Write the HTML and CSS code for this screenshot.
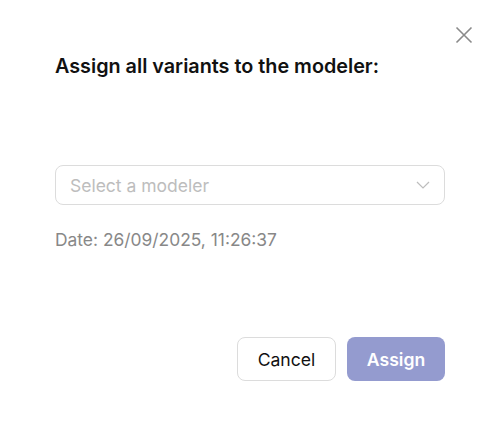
FILE: index.html
```html
<!DOCTYPE html>
<html>
<head>
<meta charset="utf-8">
<link rel="stylesheet" href="styles.css">
</head>
<body>
<div class="modal">
  <button class="close" aria-label="Close">
    <svg width="18" height="18" viewBox="0 0 18 18"><path d="M1.5 1.5L16.5 16.5M16.5 1.5L1.5 16.5" stroke="#8a8a8a" stroke-width="1.6" fill="none"/></svg>
  </button>
  <h2 class="title">Assign all variants to the modeler:</h2>
  <div class="select">
    <span class="placeholder">Select a modeler</span>
    <svg class="chev" width="14" height="8" viewBox="0 0 14 8"><path d="M1 1L7 7L13 1" stroke="#bdbdbd" stroke-width="1.2" fill="none"/></svg>
  </div>
  <div class="date">Date: 26/09/2025, 11:26:37</div>
  <div class="actions">
    <button class="btn cancel">Cancel</button>
    <button class="btn assign">Assign</button>
  </div>
</div>
</body>
</html>
```
FILE: styles.css
```css
html, body { margin: 0; padding: 0; background: #fff; }
body { font-family: Inter, "Noto Sans", sans-serif; width: 500px; height: 427px; overflow: hidden; }
.modal { position: relative; padding: 54px 55px 0 55px; display: flex; flex-direction: column; }
.close { position: absolute; top: 26px; left: 455px; width: 18px; height: 18px; padding: 0; border: 0; background: none; display: flex; }
.title { margin: 0; font-size: 19.8px; font-weight: 600; color: #111; line-height: 24px; }
.select { margin-top: 87px; height: 38px; border: 1px solid #dcdcdc; border-radius: 8px; display: flex; align-items: center; justify-content: space-between; padding: 0 14px; }
.placeholder { color: #bdbdbd; font-size: 17.5px; }
.date { margin-top: 23px; font-size: 17.4px; color: #888; line-height: 24px; }
.actions { margin-top: 85px; display: flex; justify-content: flex-end; gap: 11px; }
.btn { font-family: Inter, "Noto Sans", sans-serif; font-size: 17.6px; height: 44px; border-radius: 8px; padding: 0; }
.cancel { width: 99px; background: #fff; border: 1px solid #dcdcdc; color: #111; }
.assign { width: 98px; background: #949bcf; border: 0; color: #fff; font-weight: 600; }
```
